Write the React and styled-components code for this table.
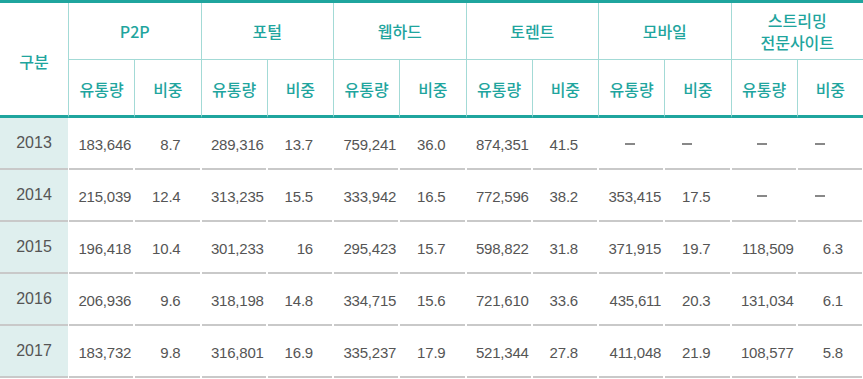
import React from 'react'
import styled, { createGlobalStyle } from 'styled-components'

const Global = createGlobalStyle`
  body {
    margin: 0;
    background: #fff;
  }
`

const TEAL = '#1fa59e'
const LINE = '#a3dad6'

const Table = styled.div`
  width: 863px;
  display: grid;
  grid-template-columns: 68px repeat(12, 1fr);
  grid-template-rows: 57px 58px repeat(5, 52px);
  border-top: 3px solid ${TEAL};
  font-family: "Liberation Sans", Arial, sans-serif;
`

const HeadCell = styled.div`
  box-sizing: border-box;
  display: flex;
  align-items: center;
  justify-content: center;
  text-align: center;
  color: ${TEAL};
  font-family: "Noto Sans CJK KR", "Noto Sans", sans-serif;
  font-weight: 500;
  font-size: 16px;
  line-height: 22px;
  white-space: pre-line;
  grid-column: ${p => p.$col} / span ${p => p.$span || 1};
  grid-row: ${p => p.$row} / span ${p => p.$rows || 1};
  border-left: ${p => (p.$first ? 'none' : `1px solid ${LINE}`)};
  border-bottom: ${p => (p.$thick ? `3px solid ${TEAL}` : `1px solid ${LINE}`)};
  padding-top: ${p => (p.$thick ? '3px' : '0')};
`

const YearCell = styled.div`
  box-sizing: border-box;
  display: flex;
  align-items: center;
  justify-content: center;
  background: #dfefee;
  color: #555;
  font-size: 16px;
  border-bottom: 2px solid #c9c9c9;
`

const DataCell = styled.div`
  position: relative;
  box-sizing: border-box;
  display: flex;
  align-items: center;
  justify-content: ${p => (p.$dash ? 'center' : 'flex-end')};
  padding-right: ${p => (p.$ratio ? '20px' : '3px')};
  color: #555;
  font-size: 15px;
  letter-spacing: -0.2px;

  &::after {
    content: '';
    position: absolute;
    left: 1px;
    right: 1px;
    bottom: 0;
    height: 2px;
    background: #c9c9c9;
  }
`

const Dash = styled.span`
  display: block;
  width: 10px;
  height: 1.5px;
  background: #888;
`

const groups = ['P2P', '포털', '웹하드', '토렌트', '모바일', '스트리밍\n전문사이트']

const rows = [
  ['2013', '183,646', '8.7', '289,316', '13.7', '759,241', '36.0', '874,351', '41.5', '-', '-', '-', '-'],
  ['2014', '215,039', '12.4', '313,235', '15.5', '333,942', '16.5', '772,596', '38.2', '353,415', '17.5', '-', '-'],
  ['2015', '196,418', '10.4', '301,233', '16', '295,423', '15.7', '598,822', '31.8', '371,915', '19.7', '118,509', '6.3'],
  ['2016', '206,936', '9.6', '318,198', '14.8', '334,715', '15.6', '721,610', '33.6', '435,611', '20.3', '131,034', '6.1'],
  ['2017', '183,732', '9.8', '316,801', '16.9', '335,237', '17.9', '521,344', '27.8', '411,048', '21.9', '108,577', '5.8'],
]

function App() {
  return (
    <>
      <Global />
      <Table>
        <HeadCell $col={1} $row={1} $rows={2} $first $thick>구분</HeadCell>
        {groups.map((g, i) => (
          <HeadCell key={g} $col={2 + i * 2} $span={2} $row={1}>{g}</HeadCell>
        ))}
        {groups.map((g, i) => (
          <React.Fragment key={'s' + g}>
            <HeadCell $col={2 + i * 2} $row={2} $thick>유통량</HeadCell>
            <HeadCell $col={3 + i * 2} $row={2} $thick>비중</HeadCell>
          </React.Fragment>
        ))}
        {rows.map(r => (
          <React.Fragment key={r[0]}>
            <YearCell>{r[0]}</YearCell>
            {r.slice(1).map((v, j) => (
              <DataCell key={j} $ratio={j % 2 === 1} $dash={v === '-'}>
                {v === '-' ? <Dash /> : v}
              </DataCell>
            ))}
          </React.Fragment>
        ))}
      </Table>
    </>
  )
}

export default App
